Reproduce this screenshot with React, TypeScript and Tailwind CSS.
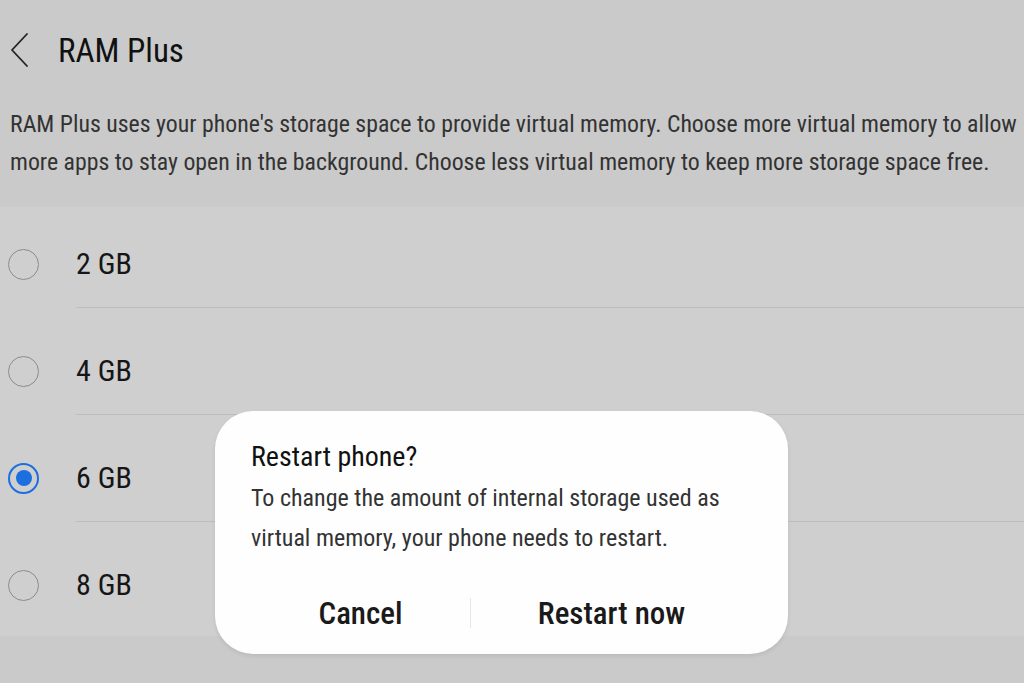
const options = [
  { label: '2 GB', selected: false },
  { label: '4 GB', selected: false },
  { label: '6 GB', selected: true },
  { label: '8 GB', selected: false },
]

function Radio({ selected }: { selected: boolean }) {
  if (selected) {
    return (
      <div className="flex h-[31px] w-[31px] items-center justify-center rounded-full border-2 border-[#1b6fde]">
        <div className="h-[16px] w-[16px] rounded-full bg-[#1b6fde]" />
      </div>
    )
  }
  return <div className="h-[31px] w-[31px] rounded-full border-[1.5px] border-[#8c8c8c]" />
}

export default function App() {
  return (
    <div
      className="relative h-[683px] w-full overflow-hidden bg-[#cacaca] text-[#111]"
      style={{ fontFamily: "'Roboto Condensed', 'Liberation Sans Narrow', Roboto, sans-serif" }}
    >
      {/* Header */}
      <div className="flex h-[100px] items-center">
        <svg width="30" height="36" viewBox="0 0 30 36" className="ml-[4px] text-[#222]">
          <path d="M23 2 L8 18 L23 34" fill="none" stroke="currentColor" strokeWidth="1.8" strokeLinecap="round" strokeLinejoin="round" />
        </svg>
        <h1 className="ml-[24px] text-[33px] leading-none text-[#111]">RAM Plus</h1>
      </div>

      {/* Description */}
      <p className="mt-[5px] pb-[26px] pl-[10px] pr-[2px] text-[23.8px] leading-[38px] text-[#333]">
        RAM Plus uses your phone's storage space to provide virtual memory. Choose more virtual memory to allow
        more apps to stay open in the background. Choose less virtual memory to keep more storage space free.
      </p>

      {/* Options */}
      <div className="flex flex-col gap-[20px] bg-[#cfcfcf] pt-[14px] pb-[8px]">
        {options.map((o, i) => (
          <div key={o.label}>
            <div className="flex h-[86px] items-center pl-[8px]">
              <Radio selected={o.selected} />
              <span className="ml-[37px] text-[30px] leading-none text-[#161616]">{o.label}</span>
            </div>
            {i < options.length - 1 && <div className="ml-[76px] h-px bg-[#bdbdbd]" />}
          </div>
        ))}
      </div>

      {/* Dialog */}
      <div className="absolute left-[215px] top-[411px] flex h-[243px] w-[573px] flex-col rounded-[38px] bg-[#fefefe] px-[36px] pt-[29px] shadow-[0_2px_4px_rgba(0,0,0,0.08)]">
        <h2 className="text-[28px] leading-[34px] text-[#111]">Restart phone?</h2>
        <p className="mt-[4px] text-[24px] leading-[40px] text-[#333]">
          To change the amount of internal storage used as
          <br />
          virtual memory, your phone needs to restart.
        </p>
        <div className="mt-[27px] flex h-[56px] items-center">
          <button className="w-[219px] text-center text-[31px] font-medium leading-none text-[#1a1a1a]">Cancel</button>
          <div className="h-[30px] w-px bg-[#e6e6e6]" />
          <button className="flex-1 text-center text-[31px] font-medium leading-none text-[#1a1a1a]">Restart now</button>
        </div>
      </div>
    </div>
  )
}
